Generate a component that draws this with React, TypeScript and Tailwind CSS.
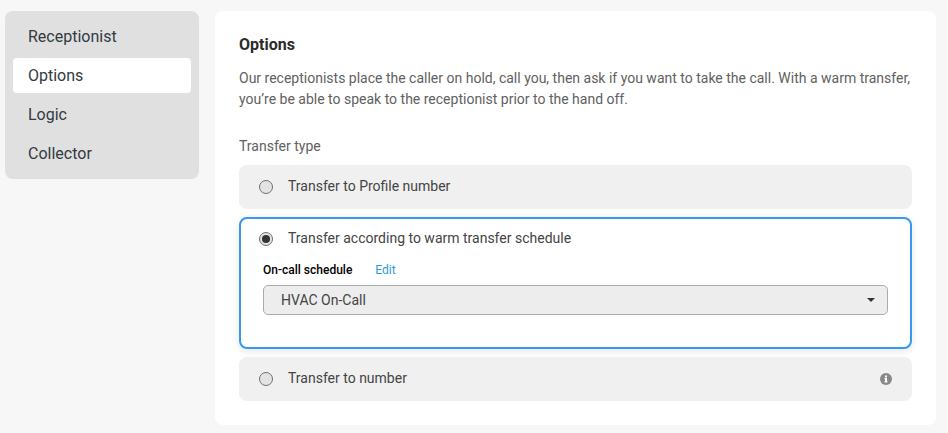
export default function App() {
  const Radio = ({ on }: { on?: boolean }) => (
    <span className="w-[14px] h-[14px] shrink-0 rounded-full border border-[#6f6f6f] bg-[#e3e3e3] flex items-center justify-center">
      {on && <span className="w-[8px] h-[8px] rounded-full bg-[#333]" />}
    </span>
  );
  return (
    <div className="w-[948px] h-[433px] bg-[#f7f7f7] flex items-start pt-[11px] pl-[5px] overflow-hidden font-['Roboto',sans-serif]">
      <nav className="w-[194px] h-[168px] bg-[#e0e0e0] rounded-[8px] px-[8px] py-[8px] flex flex-col text-[16px] text-[#333a42] shrink-0">
        <div className="h-[35px] px-[15px] flex items-center mb-[4px]">Receptionist</div>
        <div className="h-[35px] px-[15px] flex items-center mb-[4px] bg-white rounded-[4px]">Options</div>
        <div className="h-[35px] px-[15px] flex items-center mb-[4px]">Logic</div>
        <div className="h-[35px] px-[15px] flex items-center">Collector</div>
      </nav>
      <main className="ml-[16px] w-[721px] h-[414px] bg-white rounded-[8px] px-[24px] pt-[24px]">
        <h2 className="text-[16px] leading-[20px] font-bold text-[#2b2b2b]">Options</h2>
        <p className="mt-[13px] text-[14px] leading-[21px] text-[#616161] w-[680px]">
          Our receptionists place the caller on hold, call you, then ask if you want to take the call. With a warm transfer, you’re be able to speak to the receptionist prior to the hand off.
        </p>
        <div className="mt-[26px] text-[14px] leading-[20px] text-[#616161]">Transfer type</div>
        <div className="mt-[9px] h-[44px] w-[673px] rounded-[8px] bg-[#f0f0f0] pl-[20px] flex items-center gap-[15px] text-[14px] text-[#444]">
          <Radio />
          <span className="pb-[2px]">Transfer to Profile number</span>
        </div>
        <div className="mt-[8px] h-[132px] w-[673px] rounded-[8px] border-2 border-[#3399f3] bg-white shadow-[0_2px_8px_rgba(0,0,0,0.1)] pl-[18px] pr-[22px] pt-[10px]">
          <div className="flex items-center gap-[15px] h-[20px] text-[14px] text-[#444]">
            <Radio on />
            <span className="pb-[2px]">Transfer according to warm transfer schedule</span>
          </div>
          <div className="mt-[13px] pl-[4px] flex items-center text-[12px] leading-[16px]">
            <span className="font-medium text-black">On-call schedule</span>
            <span className="ml-[23px] text-[#2a9ae0]">Edit</span>
          </div>
          <div className="mt-[7px] ml-[4px] h-[30px] w-[625px] rounded-[5px] border border-[#ababab] bg-[#ededed] pl-[17px] pr-[12px] flex items-center justify-between text-[14px] text-[#444]">
            <span>HVAC On-Call</span>
            <span className="w-0 h-0 border-x-[4.5px] border-x-transparent border-t-[4.5px] border-t-[#333]" />
          </div>
        </div>
        <div className="mt-[8px] h-[44px] w-[673px] rounded-[8px] bg-[#f0f0f0] pl-[20px] pr-[20px] flex items-center gap-[15px] text-[14px] text-[#444]">
          <Radio />
          <span className="pb-[2px]">Transfer to number</span>
          <svg className="ml-auto" width="12" height="12" viewBox="0 0 12 12">
            <circle cx="6" cy="6" r="6" fill="#888" />
            <rect x="5" y="5" width="2" height="4.2" fill="#fff" />
            <rect x="4.4" y="5" width="2" height="1" fill="#fff" />
            <rect x="4.4" y="8.4" width="3.2" height="1" fill="#fff" />
            <circle cx="6" cy="3.4" r="1.1" fill="#fff" />
          </svg>
        </div>
      </main>
    </div>
  );
}
